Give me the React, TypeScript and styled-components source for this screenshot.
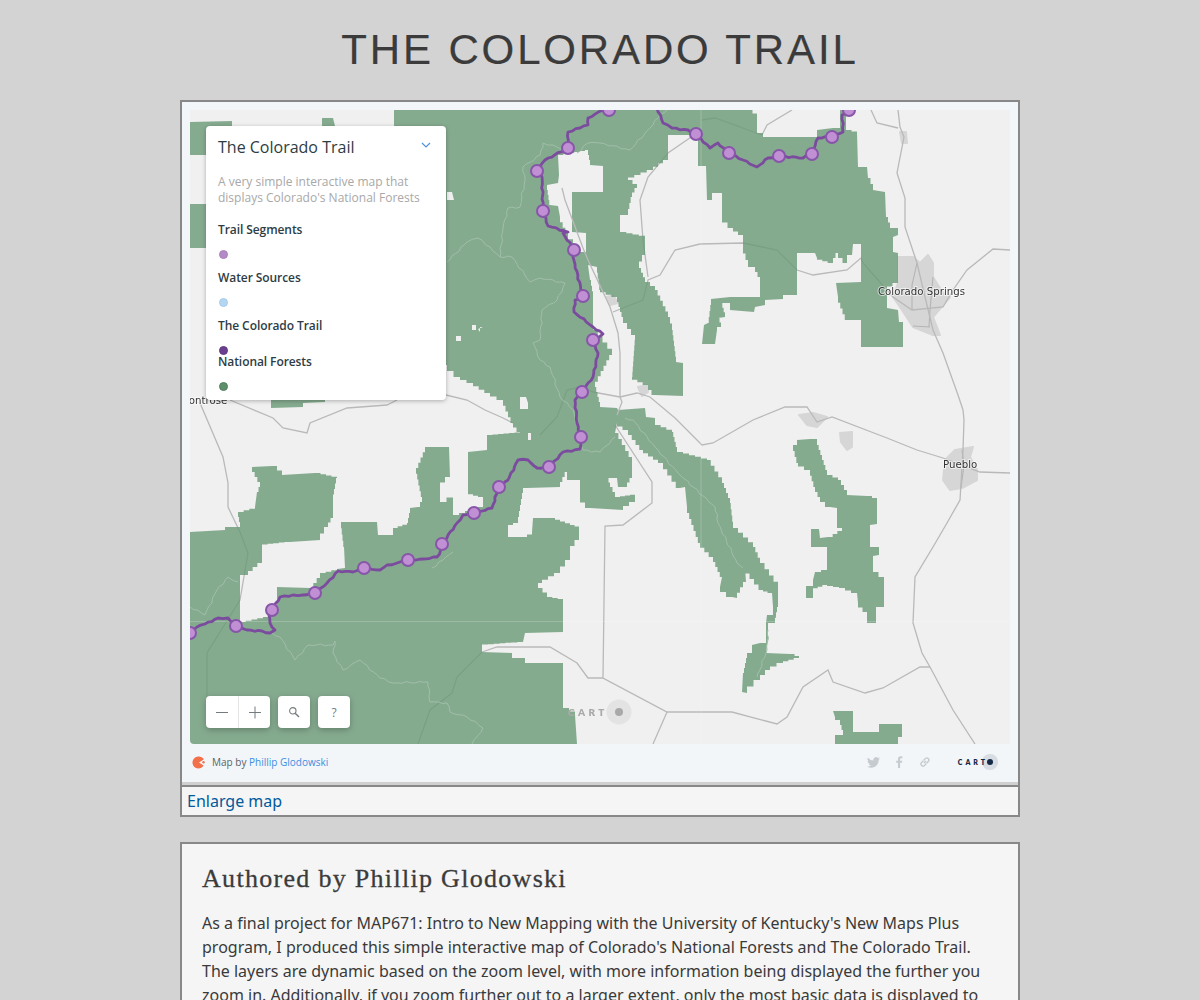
import React from "react";
import styled, { createGlobalStyle } from "styled-components";

const Global = createGlobalStyle`
  html, body { margin: 0; padding: 0; background: #d3d3d3; }
  body { font-family: "Noto Sans", "Open Sans", sans-serif; color: #333; }
  * { box-sizing: border-box; }
`;

const Page = styled.div`
  width: 840px;
  margin: 0 auto;
  padding-top: 26px;
`;

const Title = styled.h1`
  margin: 0 0 26px;
  height: 48px;
  font: 400 42px/48px "Liberation Sans", Arial, sans-serif;
  letter-spacing: 2.85px;
  -webkit-text-stroke: 0.2px #3b3b3b;
  color: #3b3b3b;
  text-align: center;
  text-transform: uppercase;
`;

const MapFrame = styled.section`
  height: 687px;
  border: 2px solid #888;
  background: #d0d0d0;
`;

const MapInner = styled.div`
  height: 680px;
  padding: 8px 8px 0;
  background: #f2f6f9;
  position: relative;
`;

const MapCanvas = styled.div`
  position: relative;
  height: 634px;
  border-radius: 0 0 0 4px;
  overflow: hidden;
  background: #f0f0f1;
  font-family: "Open Sans", "Noto Sans", sans-serif;
`;

const MapSvg = styled.svg`
  display: block;
  width: 820px;
  height: 634px;
  filter: blur(0.35px);
`;

const Legend = styled.aside`
  position: absolute;
  left: 24px;
  top: 24px;
  width: 240px;
  height: 274px;
  padding: 11px 12px;
  background: #fff;
  border-radius: 4px;
  box-shadow: 0 1px 4px rgba(0, 0, 0, 0.28);
  font-family: "Open Sans", "Noto Sans", sans-serif;
`;

const LegendHead = styled.div`
  display: flex;
  align-items: center;
  justify-content: space-between;
  height: 20px;
`;

const LegendTitle = styled.h2`
  margin: 0;
  font-size: 16px;
  line-height: 20px;
  font-weight: 400;
  color: #2e3c43;
`;

const Chevron = styled.svg`
  width: 10px;
  height: 6px;
  margin-right: 3px;
  margin-top: -4px;
`;

const LegendDesc = styled.p`
  margin: 17px 0 16px;
  font-size: 12px;
  line-height: 16px;
  color: #a8a8a8;
`;

const LegendGroup = styled.div<{ $h: number }>`
  height: ${(p) => p.$h}px;
`;

const LegendLabel = styled.div`
  font-size: 12px;
  line-height: 16px;
  font-weight: 600;
  letter-spacing: -0.08px;
  color: #2e3c43;
`;

const Dot = styled.span<{ $c: string; $b: string }>`
  display: block;
  width: 9px;
  height: 9px;
  margin: 12px 0 0 1px;
  border-radius: 50%;
  background: ${(p) => p.$c};
  border: 1px solid ${(p) => p.$b};
`;

const Controls = styled.div`
  position: absolute;
  left: 16px;
  top: 586px;
  display: flex;
  gap: 8px;
`;

const ControlGroup = styled.div`
  display: flex;
  background: #fff;
  border-radius: 4px;
  box-shadow: 0 2px 6px rgba(0, 0, 0, 0.25);
`;

const ControlButton = styled.button<{ $divided?: boolean }>`
  width: 32px;
  height: 32px;
  padding: 0;
  border: 0;
  border-left: ${(p) => (p.$divided ? "1px solid #e4e4e4" : "0")};
  background: none;
  display: flex;
  align-items: center;
  justify-content: center;
  font: 400 12px "Open Sans", sans-serif;
  color: #747b7f;
`;

const Footer = styled.div`
  display: flex;
  align-items: center;
  height: 38px;
  padding: 0 17px 2px 2px;
  font-family: "Open Sans", "Noto Sans", sans-serif;
  font-size: 10px;
  color: #5a6166;
`;

const FooterText = styled.span`
  margin-left: 7px;
  flex: 1;
`;

const FooterLink = styled.a`
  color: #3b8ee0;
  text-decoration: none;
`;

const Shares = styled.div`
  display: flex;
  align-items: center;
  gap: 16px;
  margin-right: 27px;
`;

const CartoMark = styled.div`
  display: flex;
  align-items: center;
  font: 800 7px "Lato", sans-serif;
  letter-spacing: 2.95px;
  color: #162945;
`;

const CartoDot = styled.span`
  display: block;
  width: 6px;
  height: 6px;
  margin-left: -1px;
  border-radius: 50%;
  background: #162945;
  box-shadow: 0 0 0 5px rgba(22, 41, 69, 0.12);
`;

const EnlargeBar = styled.div`
  height: 30px;
  border: 2px solid #888;
  border-top: 0;
  background: #f5f5f5;
  padding-left: 5px;
  font-size: 16px;
  line-height: 28px;
`;

const EnlargeLink = styled.a`
  color: #005a9c;
  text-decoration: none;
`;

const Article = styled.article`
  margin-top: 25px;
  height: 400px;
  padding: 17px 20px 16px;
  border: 2px solid #888;
  background: #f5f5f5;
`;

const ArticleTitle = styled.h2`
  margin: 0 0 14px;
  font: 400 26px/36px "Liberation Serif", "DejaVu Serif", serif;
  letter-spacing: 1.3px;
  -webkit-text-stroke: 0.3px #3b3b3b;
  color: #3b3b3b;
`;

const Body = styled.p`
  margin: 0;
  font-size: 16px;
  line-height: 24px;
  color: #3a3a3a;
`;

type P = [number, number];

function stair(pts: P[], step = 5.6): string {
  const out: P[] = [];
  pts.forEach((a, i) => {
    const b = pts[(i + 1) % pts.length];
    out.push(a);
    const dx = b[0] - a[0];
    const dy = b[1] - a[1];
    if (Math.abs(dx) < 2.5 || Math.abs(dy) < 2.5) return;
    const n = Math.max(1, Math.round(Math.max(Math.abs(dx), Math.abs(dy)) / step));
    for (let k = 1; k <= n; k++) {
      const t0 = (k - 1) / n;
      const t1 = k / n;
      out.push([a[0] + dx * t1, a[1] + dy * t0]);
      if (k < n) out.push([a[0] + dx * t1, a[1] + dy * t1]);
    }
  });
  return out.map((p) => p.join(",")).join(" ");
}

const line = (pts: P[]) => pts.map((p) => p.join(",")).join(" ");

function wiggle(pts: P[], amp: number, seg = 4): string {
  const out: P[] = [];
  pts.forEach((a, i) => {
    out.push(a);
    const b = pts[i + 1];
    if (!b) return;
    const dx = b[0] - a[0];
    const dy = b[1] - a[1];
    const len = Math.hypot(dx, dy);
    const n = Math.floor(len / seg);
    for (let k = 1; k < n; k++) {
      const t = k / n;
      const o = amp * Math.sin(k * 2.1 + i * 1.7) * Math.sin(Math.PI * t);
      out.push([+(a[0] + dx * t - (dy / len) * o).toFixed(2), +(a[1] + dy * t + (dx / len) * o).toFixed(2)]);
    }
  });
  return line(out);
}

const mainForest: P[] = [
  [394, 110], [748, 110], [757, 117], [757, 133], [763, 137], [813, 137], [817, 130], [833, 128], [840, 128], [840, 110], [846, 110], [846, 130], [857, 133],
  [858, 167], [867, 167], [868, 178], [873, 190], [885, 192], [886, 217], [890, 228], [898, 232], [898, 235], [893, 237], [893, 252], [898, 253], [898, 283],
  [887, 290], [887, 308], [898, 310], [899, 322], [903, 322], [903, 347], [861, 347], [861, 320], [847, 320], [838, 297], [836, 283], [861, 282], [861, 244],
  [853, 244], [852, 255], [847, 263], [838, 253], [833, 263], [817, 258], [815, 253], [797, 253], [797, 295], [783, 295], [783, 299], [765, 300], [765, 305],
  [755, 307], [754, 312], [730, 310], [730, 303], [721, 303], [725, 317], [718, 318], [721, 327], [717, 330], [715, 344], [702, 344], [704, 325], [708, 323], [711, 299], [730, 297],
  [760, 297], [760, 277], [755, 267], [748, 260], [743, 247], [743, 235], [733, 228], [722, 217], [722, 193], [717, 193], [712, 200], [707, 200], [706, 166], [698, 166], [698, 135], [668, 135],
  [668, 160], [653, 170], [628, 180], [637, 188], [632, 197], [628, 215], [620, 218], [620, 232], [645, 237], [645, 255], [639, 268], [645, 282], [655, 290], [668, 317], [672, 330], [676, 362],
  [683, 363], [683, 396], [655, 395], [648, 385], [632, 377], [635, 335], [623, 317], [617, 297], [600, 290], [597, 267], [588, 265], [590, 280], [593, 297], [593, 330], [612, 355], [595, 387], [600, 407],
  [617, 408], [618, 410], [645, 408], [646, 417], [655, 418], [655, 425], [672, 432], [677, 452], [707, 460], [722, 483], [730, 503], [733, 528], [753, 547], [760, 563], [778, 588], [778, 607], [775, 623],
  [768, 623], [768, 638], [766, 653], [790, 654], [799, 658], [783, 663], [770, 670], [760, 680], [747, 693], [742, 692], [743, 673], [747, 653], [752, 645], [760, 643], [766, 638], [766, 623], [767, 615], [773, 607],
  [772, 593], [763, 590], [745, 568], [746, 582], [737, 598], [732, 597], [720, 587], [722, 577], [713, 557], [700, 543], [687, 507], [685, 487], [680, 488], [663, 463], [643, 450], [628, 430], [617, 423], [615, 433],
  [632, 463], [632, 478], [627, 487], [618, 487], [617, 478], [607, 478], [610, 487], [615, 497], [635, 494], [635, 502], [623, 510], [590, 508], [580, 497], [580, 480], [570, 480], [567, 472], [560, 487], [527, 488],
  [523, 493], [518, 523], [508, 527], [508, 537], [522, 537], [532, 532], [533, 518], [550, 518], [570, 525], [579, 528], [579, 540], [570, 552], [570, 560], [560, 573], [542, 583], [538, 588], [547, 597], [563, 600],
  [563, 632], [525, 633], [523, 642], [482, 645], [482, 652], [512, 653], [512, 658], [525, 658], [525, 663], [563, 663], [563, 708], [575, 715], [577, 744], [190, 744], [190, 532], [225, 530], [225, 527], [235, 527], [242, 532],
  [238, 512], [255, 507], [257, 492], [260, 482], [252, 467], [272, 466], [282, 475], [315, 473], [337, 478], [333, 500], [333, 518], [328, 527], [320, 540], [290, 542], [262, 545], [262, 563], [248, 575], [240, 578], [240, 622],
  [263, 617], [277, 602], [277, 587], [310, 588], [320, 573], [337, 569], [345, 568], [344, 547], [341, 522], [377, 522], [378, 535], [390, 535], [393, 528], [407, 523], [410, 508], [418, 507], [422, 497], [416, 468], [425, 447],
  [449, 447], [450, 477], [440, 488], [440, 502], [453, 493], [453, 515], [483, 505], [483, 497], [468, 493], [468, 452], [487, 450], [487, 435], [520, 432], [513, 423], [503, 400], [490, 393], [473, 383], [460, 377], [447, 365],
  [400, 365], [394, 300],
];

const eastForest: P[] = [
  [793, 445], [797, 440], [810, 439], [817, 445], [822, 460], [827, 475], [838, 480], [847, 495], [867, 496], [877, 500], [877, 524], [870, 525], [870, 547], [879, 547], [879, 555], [873, 556], [873, 572],
  [884, 582], [884, 607], [876, 610], [876, 623], [867, 623], [867, 612], [858, 603], [857, 593], [845, 588], [827, 585], [813, 590], [813, 598], [806, 598], [806, 586], [813, 580], [815, 572], [827, 568], [827, 547],
  [811, 547], [811, 529], [819, 529], [820, 538], [828, 537], [842, 528], [837, 520], [837, 508], [830, 507], [820, 497], [815, 487], [810, 470], [798, 463],
];

const southForest: P[] = [
  [833, 711], [853, 711], [853, 732], [879, 732], [879, 724], [902, 724], [902, 737], [898, 744], [835, 744], [835, 735], [843, 730], [840, 720], [835, 717],
];

const patches: P[][] = [
  [[190, 122], [232, 121], [232, 155], [190, 155]],
  [[190, 204], [232, 204], [232, 248], [190, 248]],
  [[322, 118], [333, 118], [335, 126], [322, 126]],
  [[271, 395], [325, 395], [325, 402], [303, 403], [303, 407], [271, 408]],
];

const holes: P[][] = [
  [[558, 155], [585, 150], [587, 150], [590, 165], [603, 166], [603, 192], [572, 192], [572, 232], [586, 233], [586, 252], [583, 252], [568, 233], [560, 217], [558, 206], [550, 205], [547, 185], [558, 183], [559, 175]],
  [[456, 336], [461, 336], [461, 341], [456, 341]],
  [[472, 325], [476, 325], [476, 330], [472, 330]],
  [[478, 329], [483, 327], [480, 332]],
  [[520, 397], [526, 397], [528, 403], [528, 409], [520, 409]],
  [[528, 433], [531, 433], [531, 440], [528, 440]],
  [[447, 192], [452, 192], [454, 200], [447, 200]],
];

const cities: P[][] = [
  [[898, 257], [913, 257], [920, 263], [928, 255], [933, 263], [933, 277], [943, 293], [950, 297], [933, 317], [940, 335], [933, 335], [913, 327], [900, 307], [893, 297], [898, 283]],
  [[955, 450], [973, 447], [970, 457], [977, 470], [977, 480], [962, 488], [950, 490], [943, 480], [945, 460]],
  [[799, 415], [813, 413], [827, 417], [817, 427], [807, 425]],
  [[840, 433], [852, 432], [852, 447], [847, 450], [841, 442]],
  [[900, 132], [906, 132], [907, 143], [902, 143]],
  [[607, 297], [613, 295], [618, 303], [610, 305]],
  [[638, 387], [647, 385], [648, 392], [642, 396]],
];

const cityRoads: P[][] = [
  [[917, 263], [912, 285], [912, 310]],
  [[933, 277], [930, 310], [929, 327]],
  [[913, 326], [930, 327]],
  [[962, 450], [964, 465], [961, 488]],
];

const corridor: P[] = [[562, 188], [565, 200], [583, 248], [588, 260], [610, 307], [618, 333], [620, 353], [620, 397], [622, 402], [617, 415]];

const roads: P[][] = [
  [[898, 110], [900, 127], [904, 137], [897, 173], [905, 198], [905, 227], [917, 263], [925, 297], [933, 330], [943, 353], [958, 395], [963, 410], [964, 420], [963, 450], [960, 500], [947, 523], [933, 547], [915, 577], [913, 623], [922, 653], [930, 667], [953, 710], [975, 744]],
  [[871, 110], [877, 123], [898, 128]],
  [[1010, 250], [993, 249], [967, 270], [953, 290], [943, 307], [912, 310], [893, 297], [863, 263], [861, 258], [847, 270], [813, 275], [797, 270], [777, 250], [743, 243], [700, 244], [675, 250], [660, 275], [648, 280], [643, 300], [613, 312]],
  [[446, 395], [467, 400], [485, 410], [503, 418], [513, 423]],
  [[593, 392], [580, 387], [567, 390], [557, 417], [540, 435]],
  [[593, 392], [620, 397], [637, 393], [650, 397], [675, 418], [702, 445], [713, 443], [753, 420], [785, 407], [807, 407], [817, 422], [832, 417], [887, 438], [917, 450], [943, 458], [980, 472], [1010, 473]],
  [[792, 110], [767, 125], [762, 135]],
  [[702, 120], [715, 118], [762, 135]],
  [[697, 133], [668, 153], [648, 177], [640, 200], [643, 240], [648, 277]],
  [[615, 425], [652, 482], [652, 503], [623, 525], [605, 526], [603, 678], [667, 712], [732, 712], [777, 724], [787, 717], [803, 687], [828, 670], [833, 682], [865, 693], [883, 688], [920, 667], [930, 667]],
  [[667, 712], [653, 744]],
  [[200, 403], [223, 457], [228, 483], [228, 507], [240, 532], [248, 553], [240, 600], [207, 653], [207, 700]],
  [[230, 400], [273, 418], [283, 428], [307, 433], [310, 423], [347, 408], [387, 405], [397, 400]],
  [[482, 652], [497, 647], [550, 647], [577, 663], [588, 678], [603, 678]],
  [[482, 652], [457, 677], [452, 693], [430, 710], [418, 744]],
];

const contours: P[][] = [
  [[190, 607], [205, 615], [217, 590], [228, 577], [238, 582]],
  [[272, 633], [280, 637], [295, 660], [308, 645], [333, 645], [335, 641], [333, 653], [343, 670], [360, 660], [380, 678], [393, 683], [428, 682], [430, 702], [447, 703], [450, 712], [467, 717], [483, 728], [472, 744]],
  [[432, 568], [443, 560], [453, 552]],
  [[447, 262], [467, 242], [478, 238], [490, 247], [500, 257], [512, 257], [530, 282], [540, 278], [565, 283], [557, 300], [542, 310], [540, 340], [533, 343], [540, 360], [550, 367], [560, 397], [573, 410], [583, 450], [600, 452]],
  [[500, 257], [503, 228], [508, 208], [520, 207], [525, 180], [523, 167], [540, 155], [543, 143], [553, 145], [563, 150]],
  [[577, 153], [588, 143], [600, 143], [630, 150], [650, 128], [658, 118], [667, 110]],
  [[625, 418], [633, 420], [655, 447], [678, 473], [715, 507], [718, 523], [737, 563], [743, 568]],
  [[615, 437], [600, 452]],
  [[768, 630], [767, 650], [757, 677]],
];

const trailA: P[] = [
  [188, 636], [197, 627], [205, 624], [218, 618], [228, 618], [236, 626], [247, 630], [262, 631], [270, 633], [275, 630], [270, 623], [269, 613], [272, 610], [280, 597], [293, 595], [303, 595], [315, 593], [327, 583], [338, 571], [353, 572], [364, 568], [380, 570], [387, 565], [397, 563], [408, 560], [423, 559], [437, 557], [443, 548], [442, 544], [457, 523], [463, 515], [474, 513], [492, 508], [499, 487], [508, 480], [518, 460], [528, 460], [537, 468], [549, 467], [563, 452], [580, 449], [581, 437], [577, 423], [575, 400], [582, 392], [593, 377], [598, 353], [593, 340], [603, 334], [593, 327], [574, 312], [575, 300], [583, 297], [573, 257], [574, 250], [563, 233], [568, 232], [548, 226], [543, 210], [542, 177], [537, 171], [545, 160], [568, 148], [568, 132], [580, 128], [588, 125], [588, 118], [603, 110], [610, 108],
];

const trailB: P[] = [
  [657, 108], [663, 123], [672, 128], [688, 130], [696, 134], [703, 142], [710, 148], [718, 143], [728, 153], [743, 160], [757, 167], [768, 158], [778, 156], [803, 158], [812, 153], [818, 138], [832, 137], [843, 132], [842, 115], [849, 110],
];

const stops: P[] = [
  [849, 110], [832, 137], [812, 154], [779, 156], [729, 153], [696, 134], [609, 110], [568, 148], [537, 171], [543, 211], [574, 250], [583, 296], [593, 340], [582, 392], [581, 437], [549, 467], [499, 487], [474, 513], [442, 544], [408, 560], [364, 568], [315, 593], [272, 610], [236, 626], [190, 633],
];

const MapText = styled.text`
  font-family: "DejaVu Sans", sans-serif;
  font-size: 10.2px;
  fill: #333;
  stroke: #fff;
  stroke-width: 2px;
  stroke-opacity: 0.6;
  paint-order: stroke;
`;

const Watermark = styled.text`
  font-family: "Lato", sans-serif;
  font-size: 10px;
  font-weight: 800;
  letter-spacing: 3.4px;
  fill: #a9a9a9;
`;

function TrailMap() {
  return (
    <MapSvg viewBox="190 110 820 634">
      <rect x="190" y="110" width="820" height="634" fill="#f0f0f1" />
      {cities.map((c, i) => (
        <polygon key={i} points={line(c)} fill="#d6d6d7" stroke="#d6d6d7" strokeWidth="2" strokeLinejoin="round" />
      ))}
      {cityRoads.map((r, i) => (
        <polyline key={i} points={line(r)} fill="none" stroke="#b4b4b4" strokeWidth="1.1" />
      ))}
      {roads.map((r, i) => (
        <polyline key={i} points={line(r)} fill="none" stroke="#b9b9b9" strokeWidth="1.3" />
      ))}
      <g fill="#6a9a77" fillOpacity="0.8">
        <polygon points={stair(mainForest)} />
        <polygon points={stair(eastForest)} />
        <polygon points={stair(southForest)} />
        {patches.map((p, i) => (
          <polygon key={i} points={stair(p)} />
        ))}
      </g>
      {holes.map((h, i) => (
        <polygon key={i} points={stair(h)} fill="#f0f0f1" />
      ))}
      <polyline points={line(corridor)} fill="none" stroke="#b9b9b9" strokeWidth="1.3" />
      {contours.map((c, i) => (
        <polyline key={i} points={wiggle(c, 1.1)} fill="none" stroke="#a0bea9" strokeWidth="1" />
      ))}
      <path d="M701 110V744M190 621.5H1010" stroke="#fff" strokeOpacity="0.2" strokeWidth="1" fill="none" />
      <circle cx="619" cy="712" r="12.5" fill="#d8d8d8" fillOpacity="0.55" />
      <circle cx="619" cy="712" r="4" fill="#a9a9a9" />
      <Watermark x="568" y="716">CART</Watermark>
      <polyline points={wiggle(trailA, 0.8, 3.5)} fill="none" stroke="#7b4b9e" strokeWidth="2.8" strokeLinejoin="round" />
      <polyline points={wiggle(trailB, 0.8, 3.5)} fill="none" stroke="#7b4b9e" strokeWidth="2.8" strokeLinejoin="round" />
      {stops.map((s, i) => (
        <circle key={i} cx={s[0]} cy={s[1]} r="6" fill="#c08fd4" stroke="#8756a8" strokeWidth="2" />
      ))}
      <MapText x="878" y="295">Colorado Springs</MapText>
      <MapText x="943" y="468">Pueblo</MapText>
      <MapText x="180" y="404">Montrose</MapText>
    </MapSvg>
  );
}

const legendItems = [
  { label: "Trail Segments", c: "#b48ac8", b: "#a783bb", h: 48 },
  { label: "Water Sources", c: "#b5d6f2", b: "#a8cbe8", h: 48 },
  { label: "The Colorado Trail", c: "#6b3f8f", b: "#5f3a80", h: 36 },
  { label: "National Forests", c: "#5e8f6c", b: "#557f62", h: 36 },
];

export default function App() {
  return (
    <>
      <Global />
      <Page>
        <Title>The Colorado Trail</Title>
        <MapFrame>
          <MapInner>
            <MapCanvas>
              <TrailMap />
              <Controls>
                <ControlGroup>
                  <ControlButton aria-label="Zoom out">
                    <svg width="14" height="14" viewBox="0 0 14 14"><path d="M1 7.5H13" stroke="#747b7f" strokeWidth="1" /></svg>
                  </ControlButton>
                  <ControlButton $divided aria-label="Zoom in">
                    <svg width="14" height="14" viewBox="0 0 14 14"><path d="M1 7.5H13M7 1.5V13.5" stroke="#747b7f" strokeWidth="1" /></svg>
                  </ControlButton>
                </ControlGroup>
                <ControlGroup>
                  <ControlButton aria-label="Search">
                    <svg width="12" height="12" viewBox="0 0 12 12" fill="none" stroke="#747b7f"><circle cx="4.8" cy="4.8" r="3.2" strokeWidth="1.1" /><path d="M7.2 7.2L11 11" strokeWidth="1.4" /></svg>
                  </ControlButton>
                </ControlGroup>
                <ControlGroup>
                  <ControlButton>?</ControlButton>
                </ControlGroup>
              </Controls>
            </MapCanvas>
            <Legend>
              <LegendHead>
                <LegendTitle>The Colorado Trail</LegendTitle>
                <Chevron viewBox="0 0 10 6"><path d="M1 1L5 5L9 1" fill="none" stroke="#4a90d9" strokeWidth="1.1" /></Chevron>
              </LegendHead>
              <LegendDesc>A very simple interactive map that displays Colorado's National Forests</LegendDesc>
              {legendItems.map((it) => (
                <LegendGroup key={it.label} $h={it.h}>
                  <LegendLabel>{it.label}</LegendLabel>
                  <Dot $c={it.c} $b={it.b} />
                </LegendGroup>
              ))}
            </Legend>
            <Footer>
              <svg width="13" height="13" viewBox="0 0 13 13"><path d="M6.5 0.5A6 6 0 1 0 11.6 9.6L7 6.6L12 3.2A6 6 0 0 0 6.5 0.5Z" fill="#f2704a" /><circle cx="11.5" cy="6.3" r="1.2" fill="#f2704a" /></svg>
              <FooterText>Map by <FooterLink href="#">Phillip Glodowski</FooterLink></FooterText>
              <Shares>
                <svg width="13" height="11" viewBox="0 0 24 20"><path d="M24 2.4a10 10 0 0 1-2.8.8A5 5 0 0 0 23.300 .5a10 10 0 0 1-3.100 1.200A4.900 4.900 0 0 0 11.800 6.200 14 14 0 0 1 1.700 1a4.900 4.900 0 0 0 1.500 6.600 5 5 0 0 1-2.200-.6 4.900 4.900 0 0 0 3.900 4.900 5 5 0 0 1-2.200.1 4.900 4.900 0 0 0 4.600 3.400A9.900 9.900 0 0 1 0 17.400 14 14 0 0 0 21.500 5a10 10 0 0 0 2.500-2.600Z" fill="#c6cbcf" /></svg>
                <svg width="7" height="12" viewBox="0 0 7 12"><path d="M2 12V6.700H.2V4.700H2V3.100C2 1.300 3.100.3 4.700.3c.8 0 1.500.1 1.700.1V2.300H5.200c-.9 0-1.100.4-1.100 1.100V4.700H6.300L6 6.700H4.100V12Z" fill="#c6cbcf" /></svg>
                <svg width="12" height="12" viewBox="0 0 12 12" fill="none" stroke="#c6cbcf" strokeWidth="1.4"><path d="M5 7L7 5" /><path d="M4.600 4.400L6.400 2.600a1.900 1.900 0 0 1 2.900 2.900L7.500 7.300" /><path d="M7.300 7.600L5.500 9.400a1.900 1.900 0 0 1-2.900-2.900L4.400 4.700" /></svg>
              </Shares>
              <CartoMark>CART<CartoDot /></CartoMark>
            </Footer>
          </MapInner>
        </MapFrame>
        <EnlargeBar><EnlargeLink href="#">Enlarge map</EnlargeLink></EnlargeBar>
        <Article>
          <ArticleTitle>Authored by Phillip Glodowski</ArticleTitle>
          <Body>
            As a final project for MAP671: Intro to New Mapping with the University of Kentucky's New Maps Plus program, I produced this simple interactive map of Colorado's National Forests and The Colorado Trail. The layers are dynamic based on the zoom level, with more information being displayed the further you zoom in. Additionally, if you zoom further out to a larger extent, only the most basic data is displayed to
          </Body>
        </Article>
      </Page>
    </>
  );
}
